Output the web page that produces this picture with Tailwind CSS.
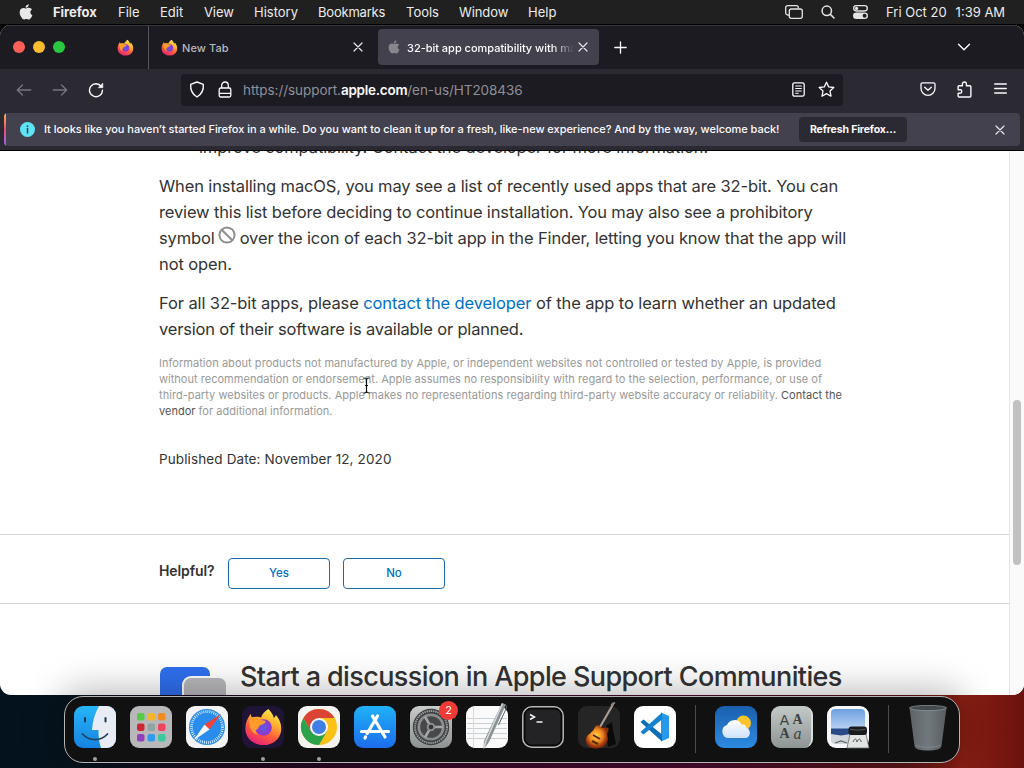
<!DOCTYPE html>
<html lang="en">
<head>
<meta charset="utf-8">
<title>32-bit app compatibility with macOS</title>
<script src="https://cdn.jsdelivr.net/npm/@tailwindcss/browser@4"></script>
</head>
<body class="w-[1024px] h-[768px] overflow-hidden font-['Inter',sans-serif] bg-black">
<svg class="absolute size-0" aria-hidden="true">
  <defs>
    <linearGradient id="ffBody" x1="0.8" y1="0" x2="0.3" y2="1"><stop offset="0" stop-color="#fff04a"/><stop offset=".35" stop-color="#ffb02e"/><stop offset=".65" stop-color="#ff5b3a"/><stop offset="1" stop-color="#e6207c"/></linearGradient>
    <radialGradient id="ffCore"><stop offset="0" stop-color="#5b5be8"/><stop offset="1" stop-color="#9334c8"/></radialGradient>
    <symbol id="apple" viewBox="0 0 16 18"><path d="M11.2 0c.1 1.100-.3 2.100-1 2.900-.7.800-1.600 1.300-2.600 1.200-.1-1 .4-2 1-2.700C9.300.600 10.300.100 11.200 0zM14.900 6.200c-1.200.700-1.900 1.700-1.900 3.100 0 1.600.9 2.800 2.300 3.300-.4 1.200-1 2.300-1.700 3.300-.7 1-1.400 1.800-2.500 1.800-1 0-1.400-.6-2.700-.6-1.300 0-1.700.6-2.700.6-1.100 0-1.900-1-2.600-2C.7 12.800.1 8.900 1.500 6.500c.8-1.400 2.100-2.200 3.500-2.200 1.200 0 2.100.7 3 .7.800 0 2-.8 3.400-.8 1.300.1 2.600.7 3.500 2z"/></symbol>
    <symbol id="firefox" viewBox="0 0 40 40"><path fill="url(#ffBody)" d="M25 2c3 3 5 6 5.500 9 1.500-.6 2-1.500 2-3 4 4.500 6.500 10 5.500 17-1.500 8-8.500 14-18 14S2.500 33 1.500 24C1 18 3 12 7 7c.2 2 .5 3 1.500 4 2.500-1 6-1.500 9-.3C18.500 7 21.500 4.500 25 2z"/><circle cx="20" cy="21" r="8.500" fill="url(#ffCore)"/><path fill="#ff9a2b" d="M6 11c4-1.500 8-.5 11 2 2 1 4 .7 5.500 1.500-1 3-4.500 3-6.500 4.500-1.500 1.500-.5 4-4 4.500 0 2 1.500 4 3 5C8 28 4 20 6 11z"/></symbol>
    <symbol id="cross" viewBox="0 0 10 10"><path d="M1 1l8 8M9 1L1 9" fill="none" stroke="currentColor" stroke-width="1.200" stroke-linecap="round"/></symbol>
  </defs>
</svg>

<div class="w-[1024px] h-[768px] flex flex-col bg-black bg-no-repeat bg-bottom bg-[length:100%_90px] bg-[linear-gradient(90deg,#04121d_0%,#06141f_8%,#20091c_22%,#3a0a2c_45%,#4a0c2e_68%,#5c1418_88%,#8c1f14_94%,#6a120e_100%)]">

  <!-- Menu bar -->
  <header class="h-6 shrink-0 flex items-center bg-[#202021] text-[#ececec] text-[13px] leading-6 pb-px whitespace-nowrap">
    <svg class="w-[14px] h-4 ml-[19px] fill-[#e8e8e8]"><use href="#apple"/></svg>
    <span class="w-[65px] ml-[20px] font-bold tracking-[-0.050px]">Firefox</span>
    <span class="w-[42px]">File</span>
    <span class="w-[44px]">Edit</span>
    <span class="w-[50px] tracking-[-0.100px]">View</span>
    <span class="w-[64px]">History</span>
    <span class="w-[88px] tracking-[-0.200px]">Bookmarks</span>
    <span class="w-[53px]">Tools</span>
    <span class="w-[69px] tracking-[-0.100px]">Window</span>
    <span class="w-[60px]">Help</span>
    <svg class="w-[18px] h-[14px] ml-[197px]" viewBox="0 0 18 14" fill="none" stroke="#e4e4e4" stroke-width="1.300"><path d="M4 10H2.700A2 2 0 0 1 .7 8V2.700a2 2 0 0 1 2-2h8.600a2 2 0 0 1 2 2v.8"/><rect x="4.300" y="4" width="13" height="9.300" rx="2"/></svg>
    <svg class="w-[14px] h-[14px] ml-[18px]" viewBox="0 0 14 14" fill="none" stroke="#e4e4e4" stroke-width="1.500" stroke-linecap="round"><circle cx="5.800" cy="5.800" r="4.700"/><path d="M9.400 9.400l3.600 3.600"/></svg>
    <svg class="w-[15px] h-[14px] ml-[18px]" viewBox="0 0 15 14"><rect x=".7" y=".7" width="13.600" height="5.300" rx="2.650" fill="none" stroke="#e4e4e4" stroke-width="1.300"/><circle cx="3.600" cy="3.400" r="1.600" fill="#e4e4e4"/><rect y="7.400" width="15" height="6.600" rx="3.300" fill="#e4e4e4"/><circle cx="11.600" cy="10.700" r="2" fill="#202021"/></svg>
    <span class="ml-[18px]">Fri Oct 20</span>
    <span class="ml-[9px]">1:39 AM</span>
  </header>

  <!-- Browser window -->
  <section class="h-[670px] mt-px shrink-0 rounded-[11px] overflow-hidden flex flex-col bg-white">
    <!-- Tab strip -->
    <div class="h-11 shrink-0 flex items-center bg-[#1c1b22] border-t border-[#37363c]">
      <div class="flex gap-2 ml-[13px] -mt-px">
        <i class="size-3 rounded-full bg-[#ff5f57]"></i><i class="size-3 rounded-full bg-[#febc2e]"></i><i class="size-3 rounded-full bg-[#28c840]"></i>
      </div>
      <svg class="size-[17px] ml-[52px] -mt-px"><use href="#firefox"/></svg>
      <div class="h-full w-px bg-[#56555e] ml-[14px]"></div>
      <svg class="size-[17px] ml-[12px] -mt-px"><use href="#firefox"/></svg>
      <span class="w-[171px] ml-[4px] pt-px text-[11px] font-medium text-[#b9b8bd] tracking-[0.100px]">New Tab</span>
      <svg class="size-[10px] -mt-px text-[#e6e6ea]"><use href="#cross"/></svg>
      <div class="ml-[15px] w-[221px] h-9 -mt-px rounded-[4px] bg-[#42414d] flex items-center">
        <svg class="w-[12px] h-[14px] ml-[10px] -mt-px fill-[#87868d]"><use href="#apple"/></svg>
        <span class="ml-[7px] pt-[2px] w-[169px] overflow-hidden whitespace-nowrap text-[11px] font-medium text-[#fbfbfe] tracking-[-0.020px] [mask-image:linear-gradient(90deg,#000_86%,transparent_99%)]">32-bit app compatibility with macOS</span>
        <svg class="size-[10px] ml-[2px] text-[#e6e6ea]"><use href="#cross"/></svg>
      </div>
      <svg class="size-[13px] ml-[15px]" viewBox="0 0 13 13" stroke="#fbfbfe" stroke-width="1.300" stroke-linecap="round"><path d="M6.500.8v11.400M.8 6.500h11.400"/></svg>
      <svg class="w-[14px] h-[8px] ml-[330px] -mt-[2px]" viewBox="0 0 14 8" fill="none" stroke="#fbfbfe" stroke-width="1.400" stroke-linecap="round" stroke-linejoin="round"><path d="M1.500 1.200L7 6.700l5.500-5.500"/></svg>
    </div>

    <!-- Navigation toolbar -->
    <div class="h-11 shrink-0 flex items-center bg-[#2b2a33] pb-[3px]">
      <svg class="w-[16px] h-[14px] ml-[16px]" viewBox="0 0 16 14" fill="none" stroke="#77767e" stroke-width="1.300" stroke-linecap="round" stroke-linejoin="round"><path d="M6.500 2L1.300 7l5.200 5M1.500 7h13.300"/></svg>
      <svg class="w-[16px] h-[14px] ml-[20px]" viewBox="0 0 16 14" fill="none" stroke="#77767e" stroke-width="1.300" stroke-linecap="round" stroke-linejoin="round"><path d="M9.500 2l5.200 5-5.200 5M14.500 7H1.200"/></svg>
      <svg class="size-[16px] ml-[20px]" viewBox="0 0 16 16" fill="none" stroke="#fbfbfe" stroke-width="1.400" stroke-linecap="round"><path d="M13.300 4.500A6.500 6.500 0 1 0 14.500 8.300"/><path d="M14.800 1.500v4.200h-4.200z" fill="#fbfbfe" stroke-width=".6" stroke-linejoin="round"/></svg>
      <div class="ml-[77px] w-[662px] h-8 rounded-[4px] bg-[#1c1b22] flex items-center">
        <svg class="w-[16px] h-[17px] ml-[8px] -mt-px" viewBox="0 0 16 17" fill="none" stroke="#fbfbfe" stroke-width="1.400" stroke-linejoin="round"><path d="M8 1l6.300 2.300c.4 5-1 9.700-6.300 12.700C2.700 13 1.300 8.300 1.700 3.300z"/></svg>
        <svg class="w-[14px] h-[17px] ml-[13px] -mt-px" viewBox="0 0 14 17" fill="none" stroke="#fbfbfe" stroke-width="1.300"><rect x="1.200" y="7" width="11.600" height="9" rx="1.500"/><path d="M3.700 7V4.300a3.300 3.300 0 0 1 6.600 0V7M1.200 12.300h11.600"/></svg>
        <span class="w-[540px] ml-[11px] pt-px text-[13.500px] text-[#8f8f98] whitespace-nowrap tracking-[-0.060px]">https://support.<span class="text-[#fbfbfe] font-semibold tracking-[-0.250px]">apple.com</span>/en-us/HT208436</span>
        <svg class="w-[13px] h-[15px] ml-[9px] -mt-px" viewBox="0 0 13 15" fill="none" stroke="#fbfbfe" stroke-width="1.300" stroke-linecap="round"><rect x=".8" y=".8" width="11.400" height="13.400" rx="1.800"/><path d="M3.700 4h5.600M3.700 6.500h5.600M3.700 9h5.600M3.700 11.300h2.500" stroke-width="1.100"/></svg>
        <svg class="size-[17px] ml-[13px] -mt-px" viewBox="0 0 17 17" fill="none" stroke="#fbfbfe" stroke-width="1.300" stroke-linejoin="round"><path d="M8.500 1.200l2.200 4.700 5.100.6-3.800 3.500 1 5.200-4.500-2.600L4 15.200l1-5.200L1.200 6.500l5.100-.6z"/></svg>
      </div>
      <svg class="w-[16px] h-[14px] ml-[77px] -mt-px" viewBox="0 0 16 14" fill="none" stroke="#fbfbfe" stroke-width="1.300" stroke-linecap="round" stroke-linejoin="round"><path d="M2.500.8h11a1.500 1.500 0 0 1 1.500 1.500V6.300a7 7 0 0 1-14 0V2.300A1.500 1.500 0 0 1 2.500.8z"/><path d="M4.700 5.200L8 8.300l3.300-3.100"/></svg>
      <svg class="size-[17px] ml-[20px] -mt-px" viewBox="0 0 16 16" fill="none" stroke="#fbfbfe" stroke-width="1.300" stroke-linejoin="round"><path d="M2 5.500a1 1 0 0 1 1-1h3V2.800a1.900 1.900 0 0 1 3.800 0v1.700H13a1 1 0 0 1 1 1V14a1 1 0 0 1-1 1H3a1 1 0 0 1-1-1v-2.500h1.800a1.600 1.600 0 0 0 0-3.300H2z"/></svg>
      <svg class="w-[13px] h-[11px] ml-[21px] -mt-[2px]" viewBox="0 0 13 11" stroke="#fbfbfe" stroke-width="1.300" stroke-linecap="round"><path d="M.7 1h11.600M.7 5.500h11.600M.7 10h11.600"/></svg>
    </div>

    <!-- Notification bar -->
    <div class="h-[38px] shrink-0 bg-[#2b2a33] px-1 border-b border-black">
      <div class="h-[33px] rounded-[4px] overflow-hidden bg-[#42414d] flex items-center text-[#fbfbfe] whitespace-nowrap">
        <i class="w-[2px] h-full bg-linear-to-b from-[#ffb347] via-[#e8486f] to-[#9059ff]"></i>
        <svg class="size-[15px] ml-[14px]" viewBox="0 0 15 15"><circle cx="7.500" cy="7.500" r="7.500" fill="#5fe3f7"/><path d="M7.500 6.600v4.500" stroke="#2b4a55" stroke-width="1.500" stroke-linecap="round"/><circle cx="7.500" cy="4.100" r=".95" fill="#2b4a55"/></svg>
        <span class="w-[755px] ml-[9px] text-[11px] font-medium tracking-[-0.040px]">It looks like you haven’t started Firefox in a while. Do you want to clean it up for a fresh, like-new experience? And by the way, welcome back!</span>
        <span class="w-[108px] h-[25px] rounded-[4px] bg-[#2b2a33] text-center text-[10.500px] leading-[25px] font-bold tracking-[-0.150px]">Refresh Firefox…</span>
        <svg class="size-[10px] ml-[88px] text-[#e6e6ea]"><use href="#cross"/></svg>
      </div>
    </div>

    <!-- Page -->
    <div class="h-[544px] flex overflow-hidden">
      <main class="w-[1009px] overflow-hidden text-[#333] whitespace-nowrap">
        <div class="flow-root pl-[159px] h-[383px] border-b border-[#d6d6d6] box-content text-[16.500px] leading-[26px]">
          <p class="-mt-[17px] pl-[40px] tracking-[-0.130px]">improve compatibility. Contact the developer for more information.</p>
          <p class="mt-[13px]">
            <span class="block tracking-[-0.134px]">When installing macOS, you may see a list of recently used apps that are 32-bit. You can</span>
            <span class="block tracking-[-0.145px]">review this list before deciding to continue installation. You may also see a prohibitory</span>
            <span class="block tracking-[-0.130px]">symbol<svg class="inline-block size-[18px] ml-[3px] mr-[4px] -mt-[9px] align-middle" viewBox="0 0 18 18" fill="none" stroke="#8e8e8e" stroke-width="2"><circle cx="9" cy="9" r="7.600"/><path d="M3.700 3.700l10.600 10.600"/></svg>over the icon of each 32-bit app in the Finder, letting you know that the app will</span>
            <span class="block tracking-[-0.100px]">not open.</span>
          </p>
          <p class="mt-[13px]">
            <span class="block tracking-[-0.113px]">For all 32-bit apps, please <a class="text-[#0070c9]">contact the developer</a> of the app to learn whether an updated</span>
            <span class="block tracking-[-0.180px]">version of their software is available or planned.</span>
          </p>
          <p class="mt-[13px] text-[11px] leading-4 text-[#999]">
            <span class="block tracking-[0.044px]">Information about products not manufactured by Apple, or independent websites not controlled or tested by Apple, is provided</span>
            <span class="block tracking-[0.026px]">without recommendation or endorsement. Apple assumes no responsibility with regard to the selection, performance, or use of</span>
            <span class="block tracking-[0.038px]">third-party websites or products. Apple makes no representations regarding third-party website accuracy or reliability. <a class="text-[#555]">Contact the</a></span>
            <span class="block tracking-[0.020px]"><a class="text-[#555]">vendor</a> for additional information.</span>
          </p>
          <p class="mt-[30px] text-[13.500px] leading-5 tracking-[0.120px]">Published Date: November 12, 2020</p>
        </div>
        <div class="h-[68px] box-content border-b border-[#d6d6d6] pl-[159px] flex items-center">
          <span class="w-[69px] text-[14px] font-semibold pt-[3px] tracking-[-0.100px]">Helpful?</span>
          <button class="w-[102px] h-[31px] mt-[9px] pt-px rounded-[4px] border border-[#1b6ca8] text-[#0070c9] text-[11.500px] font-medium">Yes</button>
          <button class="w-[102px] h-[31px] mt-[9px] pt-px ml-[13px] rounded-[4px] border border-[#1b6ca8] text-[#0070c9] text-[11.500px] font-medium">No</button>
        </div>
        <div class="flex pl-[160px] pt-[55px]">
          <svg class="w-[66px] h-[60px] mt-[8px]" viewBox="0 0 66 60"><rect width="50" height="50" rx="7" fill="#2f6fee"/><rect x="22" y="9" width="48" height="54" rx="9" fill="#fff"/><rect x="24" y="11" width="42" height="54" rx="7" fill="#b9b9bc"/></svg>
          <h2 class="ml-[14px] text-[27px] leading-[36px] font-medium tracking-[-0.610px]">Start a discussion in Apple Support Communities</h2>
        </div>
      </main>
      <aside class="w-[15px] bg-[#fafafa] border-l border-[#e6e6e6] pt-[249px] pl-[3px]">
        <div class="w-2 h-[165px] rounded-full bg-[#c1c1c1]"></div>
      </aside>
    </div>
  </section>

  <!-- Dock -->
  <nav class="relative w-[896px] h-[67px] mt-px ml-[64px] shrink-0 rounded-[19px] border border-[#b4b4b4] bg-[#111112] shadow-[0_0_36px_6px_rgba(0,0,0,0.280)] flex items-start pt-[9px] pl-[9px] gap-[14px]">
    <!-- Finder -->
    <div class="flex flex-col items-center">
      <svg class="size-[42px]" viewBox="0 0 42 42"><defs><linearGradient id="fi" x2="0" y2="1"><stop stop-color="#27b5f8"/><stop offset="1" stop-color="#1683e0"/></linearGradient><clipPath id="fc"><rect width="42" height="42" rx="9"/></clipPath></defs><g clip-path="url(#fc)"><path fill="url(#fi)" d="M0 0h42v42H0z"/><path fill="#e9ecf4" d="M25 0c-4 7-6.500 15-7 24h6.500c-.2 6 .5 12 2.500 18h15V0z"/></g><path d="M11 12v3.500M31.500 12v3.500" stroke="#173a56" stroke-width="2" stroke-linecap="round"/><path d="M8.500 28c7 7.500 18 7.500 25 0" fill="none" stroke="#24425c" stroke-width="1.800" stroke-linecap="round"/></svg>
      <i class="size-1 rounded-full bg-[#a0a0a0] mt-[9px]"></i>
    </div>
    <!-- Launchpad -->
    <svg class="size-[42px]" viewBox="0 0 42 42"><rect width="42" height="42" rx="9" fill="#b8b8ba"/><rect x="7" y="7" width="7.500" height="7.500" rx="2" fill="#57cb45"/><rect x="17.500" y="7" width="7.500" height="7.500" rx="2" fill="#f5b52b"/><rect x="28" y="7" width="7.500" height="7.500" rx="2" fill="#f28c22"/><rect x="7" y="17.500" width="7.500" height="7.500" rx="2" fill="#cf2732"/><rect x="17.500" y="17.500" width="7.500" height="7.500" rx="2" fill="#8ea5a3"/><rect x="28" y="17.500" width="7.500" height="7.500" rx="2" fill="#f0435f"/><rect x="7" y="28" width="7.500" height="7.500" rx="2" fill="#9240be"/><rect x="17.500" y="28" width="7.500" height="7.500" rx="2" fill="#2f9af0"/><rect x="28" y="28" width="7.500" height="7.500" rx="2" fill="#3cc9a0"/></svg>
    <!-- Safari -->
    <svg class="size-[42px]" viewBox="0 0 42 42"><rect width="42" height="42" rx="9" fill="#f3f3f5"/><circle cx="21" cy="21" r="18" fill="#2a8cec"/><circle cx="21" cy="21" r="15.500" fill="none" stroke="#e8f4ff" stroke-width="2.800" stroke-dasharray=".8 1.230"/><path d="M35 8L18.500 18.500l5 5z" fill="#f0433c"/><path d="M7.500 34.500l11-16 5 5z" fill="#f6f6f6"/></svg>
    <!-- Firefox -->
    <div class="flex flex-col items-center">
      <svg class="size-[42px]" viewBox="0 0 42 42"><rect width="42" height="42" rx="9" fill="#1f1336"/><use href="#firefox" x="2" y="1" width="39" height="39"/></svg>
      <i class="size-1 rounded-full bg-[#a0a0a0] mt-[9px]"></i>
    </div>
    <!-- Chrome -->
    <div class="flex flex-col items-center">
      <svg class="size-[42px]" viewBox="0 0 42 42"><rect width="42" height="42" rx="9" fill="#f4f3f0"/><circle cx="21" cy="21" r="18" fill="#fbc116"/><path fill="#dc4337" d="M5.400 12A18 18 0 0 1 36.600 12H21L13.200 25.500z"/><path fill="#2ba24c" d="M5.400 12A18 18 0 0 0 21 39l7.800-13.500H13.200z"/><circle cx="21" cy="21" r="9" fill="#f6f6f6"/><circle cx="21" cy="21" r="7" fill="#3f7fe6"/></svg>
      <i class="size-1 rounded-full bg-[#a0a0a0] mt-[9px]"></i>
    </div>
    <!-- App Store -->
    <svg class="size-[42px]" viewBox="0 0 42 42"><defs><linearGradient id="as" x2="0" y2="1"><stop stop-color="#1fb2f8"/><stop offset="1" stop-color="#1c6cec"/></linearGradient></defs><rect width="42" height="42" rx="9" fill="url(#as)"/><path d="M18.500 10L31 31M23.500 10l-10.300 17.500M11.500 31l-.5 1M7.500 25.500H25M30 25.500h4.500" fill="none" stroke="#fff" stroke-width="3.200" stroke-linecap="round"/></svg>
    <!-- System Preferences -->
    <div class="relative">
      <svg class="size-[42px]" viewBox="0 0 42 42"><defs><linearGradient id="sp" x2="0" y2="1"><stop stop-color="#c9cbcb"/><stop offset="1" stop-color="#8f9292"/></linearGradient></defs><rect width="42" height="42" rx="9" fill="url(#sp)"/><circle cx="21" cy="21" r="18.200" fill="#3c3e3f"/><circle cx="21" cy="21" r="16" fill="none" stroke="#9a9d9d" stroke-width="2" stroke-dasharray="1.400 .8"/><circle cx="21" cy="21" r="13.600" fill="#8b8e8e"/><circle cx="21" cy="21" r="10.800" fill="#464849"/><path d="M21 21H33M21 21l-6-10.400M21 21l-6 10.400" stroke="#a5a8a8" stroke-width="2.600"/><circle cx="21" cy="21" r="4.300" fill="#8b8e8e"/><circle cx="21" cy="21" r="2.300" fill="#333"/></svg>
      <span class="absolute -top-[5px] left-[29px] size-[19px] rounded-full bg-[#f23b34] text-white text-[11px] leading-[19px] text-center">2</span>
    </div>
    <!-- TextEdit -->
    <svg class="size-[42px] overflow-visible" viewBox="0 0 42 42"><rect width="42" height="42" rx="9" fill="#fafafa"/><path d="M1 12.500h40M1 17.500h40M1 22.500h40M1 27.500h40M1 32.500h40" stroke="#c9d0d8"/><path d="M7.500 0v42" stroke="#e3d8d8"/><path d="M36-3l4 1.500L23 36l-5.500 7.500L18 35z" fill="#8c9194"/><path d="M36.500-2.500L19.500 36l-1.500 6" stroke="#d5d9da" stroke-width="1.500" fill="none"/><path d="M40-1l.5 3-8 17" stroke="#5d6265" stroke-width="1" fill="none"/></svg>
    <!-- Terminal -->
    <svg class="size-[42px]" viewBox="0 0 42 42"><rect x=".8" y=".8" width="40.400" height="40.400" rx="9" fill="#09090a" stroke="#b7b7b7" stroke-width="1.500"/><rect x="3.500" y="3.500" width="35" height="35" rx="6" fill="#232325"/><path d="M8 8.500l4.500 2.500L8 13.500M14.500 16h6" fill="none" stroke="#f2f2f2" stroke-width="1.500"/></svg>
    <!-- GarageBand -->
    <svg class="size-[42px] overflow-visible" viewBox="0 0 42 42"><defs><radialGradient id="gb" cx=".45" cy=".45"><stop stop-color="#ffd04a"/><stop offset=".55" stop-color="#f08a20"/><stop offset="1" stop-color="#8b2a0c"/></radialGradient></defs><rect width="42" height="42" rx="9" fill="#262526"/><path d="M28 20l6-4 1 8 3 14-8 3z" fill="#0a0a0a"/><path d="M22 21L33.500 1l2-4" stroke="#a89a8e" stroke-width="2.200" fill="none"/><path d="M33-1l4-2.500" stroke="#8d7f75" stroke-width="2"/><path d="M17 21c2-3 5-1.500 6 .5 2 1.500 6-1.500 7.500 1 .8 2.500-2 4-1 7.500 1.500 6-2.500 12-10.500 12.500C11.500 43 7 38.500 8 33c.8-5 7-6 9-12z" fill="url(#gb)"/><path d="M15 29l7 4M14 35l6 3" stroke="#5a2a12" stroke-width="2"/></svg>
    <!-- Visual Studio Code -->
    <svg class="size-[42px]" viewBox="0 0 42 42"><rect width="42" height="42" rx="9" fill="#fff"/><path d="M27 6.500l8 3.500v22l-8 3.500z" fill="#2699ea"/><path d="M6.500 16l3-2.500L28 28.500v7z" fill="#0b6fb8"/><path d="M6.500 26l3 2.500L28 13.500v-7z" fill="#1482cf"/></svg>
    <i class="w-px h-[48px] mx-[5px] -mt-px bg-[#4c4c4e]"></i>
    <!-- Weather -->
    <svg class="size-[42px]" viewBox="0 0 42 42"><defs><linearGradient id="we" x2="0" y2="1"><stop stop-color="#1a5fae"/><stop offset="1" stop-color="#2c8ae0"/></linearGradient><linearGradient id="cl" x2="0" y2="1"><stop stop-color="#fff"/><stop offset="1" stop-color="#cfe2fa"/></linearGradient></defs><rect width="42" height="42" rx="9" fill="url(#we)"/><circle cx="28.500" cy="17" r="7.500" fill="#fcc42c"/><path d="M13 32a6.700 6.700 0 0 1-1-13 8 8 0 0 1 14.500-.5c4-.5 5 2 5 3.500 5 1.500 4.500 10-1.500 10z" fill="url(#cl)"/></svg>
    <!-- Font Book -->
    <div class="size-[42px] rounded-[9px] bg-linear-to-b from-[#c3cac8] to-[#8e9594] border-r-2 border-[#d9dddc] grid grid-cols-2 content-center justify-items-center px-[7px] text-[#3c4242] text-[14px] leading-[14px]">
      <span class="font-['Liberation_Sans',sans-serif]">A</span><span class="font-['Liberation_Serif',serif] font-bold">A</span><span class="font-['Liberation_Serif',serif] font-bold">A</span><span class="font-['Liberation_Serif',serif] italic text-[16px]">a</span>
    </div>
    <!-- Preview -->
    <svg class="size-[42px] overflow-visible" viewBox="0 0 42 42"><defs><linearGradient id="pv" x2="0" y2="1"><stop stop-color="#6d9fe0"/><stop offset="1" stop-color="#b8d2f2"/></linearGradient></defs><rect width="42" height="42" rx="9" fill="#f6f7fa"/><path d="M4 7a4 4 0 0 1 4-4h26a4 4 0 0 1 4 4v16H4z" fill="url(#pv)"/><path d="M4 22.500h34V30H4z" fill="#284a86"/><path d="M4 28l10 1.500L24 28l14 2v4a4 4 0 0 1-4 4H8a4 4 0 0 1-4-4z" fill="#cfd6dc"/><path d="M8 37l6-2 6 2" stroke="#5d6a55" stroke-width="1.200" fill="none"/><path d="M23 28h16l3 14H20z" fill="#e2e4e4" stroke="#65696b" stroke-width=".8"/><rect x="21.500" y="20.500" width="18.500" height="8.500" rx="3" fill="#1a1b1d"/><path d="M23 23.200c5 1.200 11 1.200 15.500 0" stroke="#55585c" fill="none"/><path d="M26 36c2-4 3-4 4 0 1.500-4 4-3.500 4 0" stroke="#555" fill="none"/></svg>
    <i class="w-px h-[48px] mx-[5px] -mt-px bg-[#4c4c4e]"></i>
    <!-- Trash -->
    <svg class="w-[40px] h-[46px] -mt-px" viewBox="0 0 40 46"><defs><linearGradient id="tr"><stop stop-color="#5d6366"/><stop offset=".5" stop-color="#72797c"/><stop offset="1" stop-color="#575d60"/></linearGradient></defs><path d="M1.500 2.500h37L33.500 41c-.4 3-5 4.500-13.500 4.500S6.900 44 6.500 41z" fill="url(#tr)"/><ellipse cx="20" cy="3" rx="18.500" ry="2.600" fill="#454a4d" stroke="#8a9194" stroke-width=".8"/><path d="M8 40c3 3 21 3 24 0" stroke="#8a9194" stroke-width=".7" fill="none"/></svg>
  </nav>
</div>

<!-- Text cursor -->
<svg class="absolute left-[362px] top-[377px] w-[9px] h-[17px]" viewBox="0 0 9 17" fill="none" stroke="#111" stroke-width="1.200"><path d="M1.500 1c1.700 0 3 .5 3 1.800v11.400c0 1.300-1.300 1.800-3 1.800M7.500 1c-1.700 0-3 .5-3 1.800M7.500 16c-1.700 0-3-.5-3-1.800M3 8.500h3"/></svg>
</body>
</html>
